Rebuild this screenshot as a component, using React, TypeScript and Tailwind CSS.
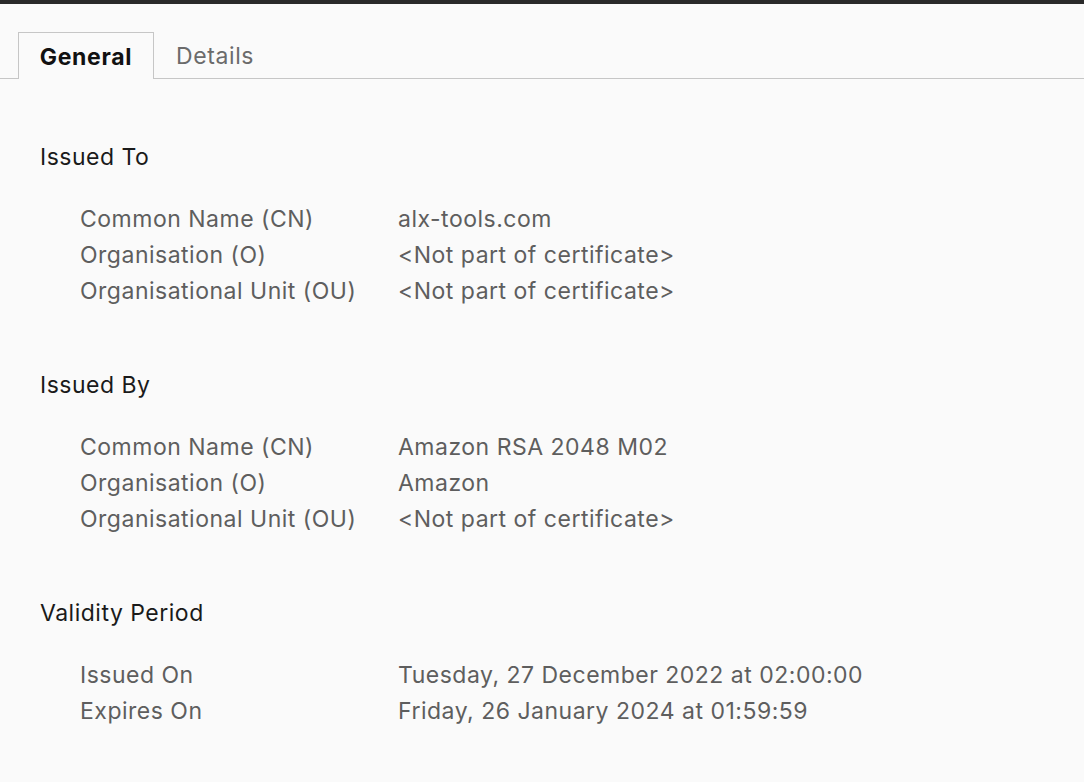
import React from "react";

const sections = [
  {
    title: "Issued To",
    rows: [
      ["Common Name (CN)", "alx-tools.com"],
      ["Organisation (O)", "<Not part of certificate>"],
      ["Organisational Unit (OU)", "<Not part of certificate>"],
    ],
  },
  {
    title: "Issued By",
    rows: [
      ["Common Name (CN)", "Amazon RSA 2048 M02"],
      ["Organisation (O)", "Amazon"],
      ["Organisational Unit (OU)", "<Not part of certificate>"],
    ],
  },
  {
    title: "Validity Period",
    rows: [
      ["Issued On", "Tuesday, 27 December 2022 at 02:00:00"],
      ["Expires On", "Friday, 26 January 2024 at 01:59:59"],
    ],
  },
];

export default function App() {
  return (
    <div
      className="w-[1084px] h-[782px] bg-[#fafafa] overflow-hidden flex flex-col"
      style={{ fontFamily: "Inter, 'Noto Sans', sans-serif" }}
    >
      <div className="h-[4px] bg-[#2a2a2a]" />
      <div className="mt-[28px] flex items-end h-[47px]">
        <div className="w-[18px] h-full border-b border-[#c6c6c6]" />
        <div className="w-[136px] h-full border border-b-0 border-[#c6c6c6] flex items-center justify-center pt-[2px] text-[23px] tracking-[0.7px] font-bold text-[#111]">
          General
        </div>
        <div className="flex-1 h-full border-b border-[#c6c6c6] flex items-center pl-[22px] pt-[2px] text-[23px] tracking-[0.6px] text-[#6b6b6b]">
          Details
        </div>
      </div>
      <div className="pl-[40px] pt-[60px] flex flex-col gap-[58px]">
        {sections.map((s) => (
          <div key={s.title} className="flex flex-col">
            <div className="h-[36px] leading-[36px] text-[23px] tracking-[0.5px] text-[#1a1a1a]">{s.title}</div>
            <div className="mt-[26px] pl-[40px] flex flex-col">
              {s.rows.map(([k, v]) => (
                <div key={k} className="flex h-[36px] leading-[36px] text-[23px] tracking-[0.5px] text-[#5e5e5e]">
                  <div className="w-[318px]">{k}</div>
                  <div>{v}</div>
                </div>
              ))}
            </div>
          </div>
        ))}
      </div>
    </div>
  );
}
